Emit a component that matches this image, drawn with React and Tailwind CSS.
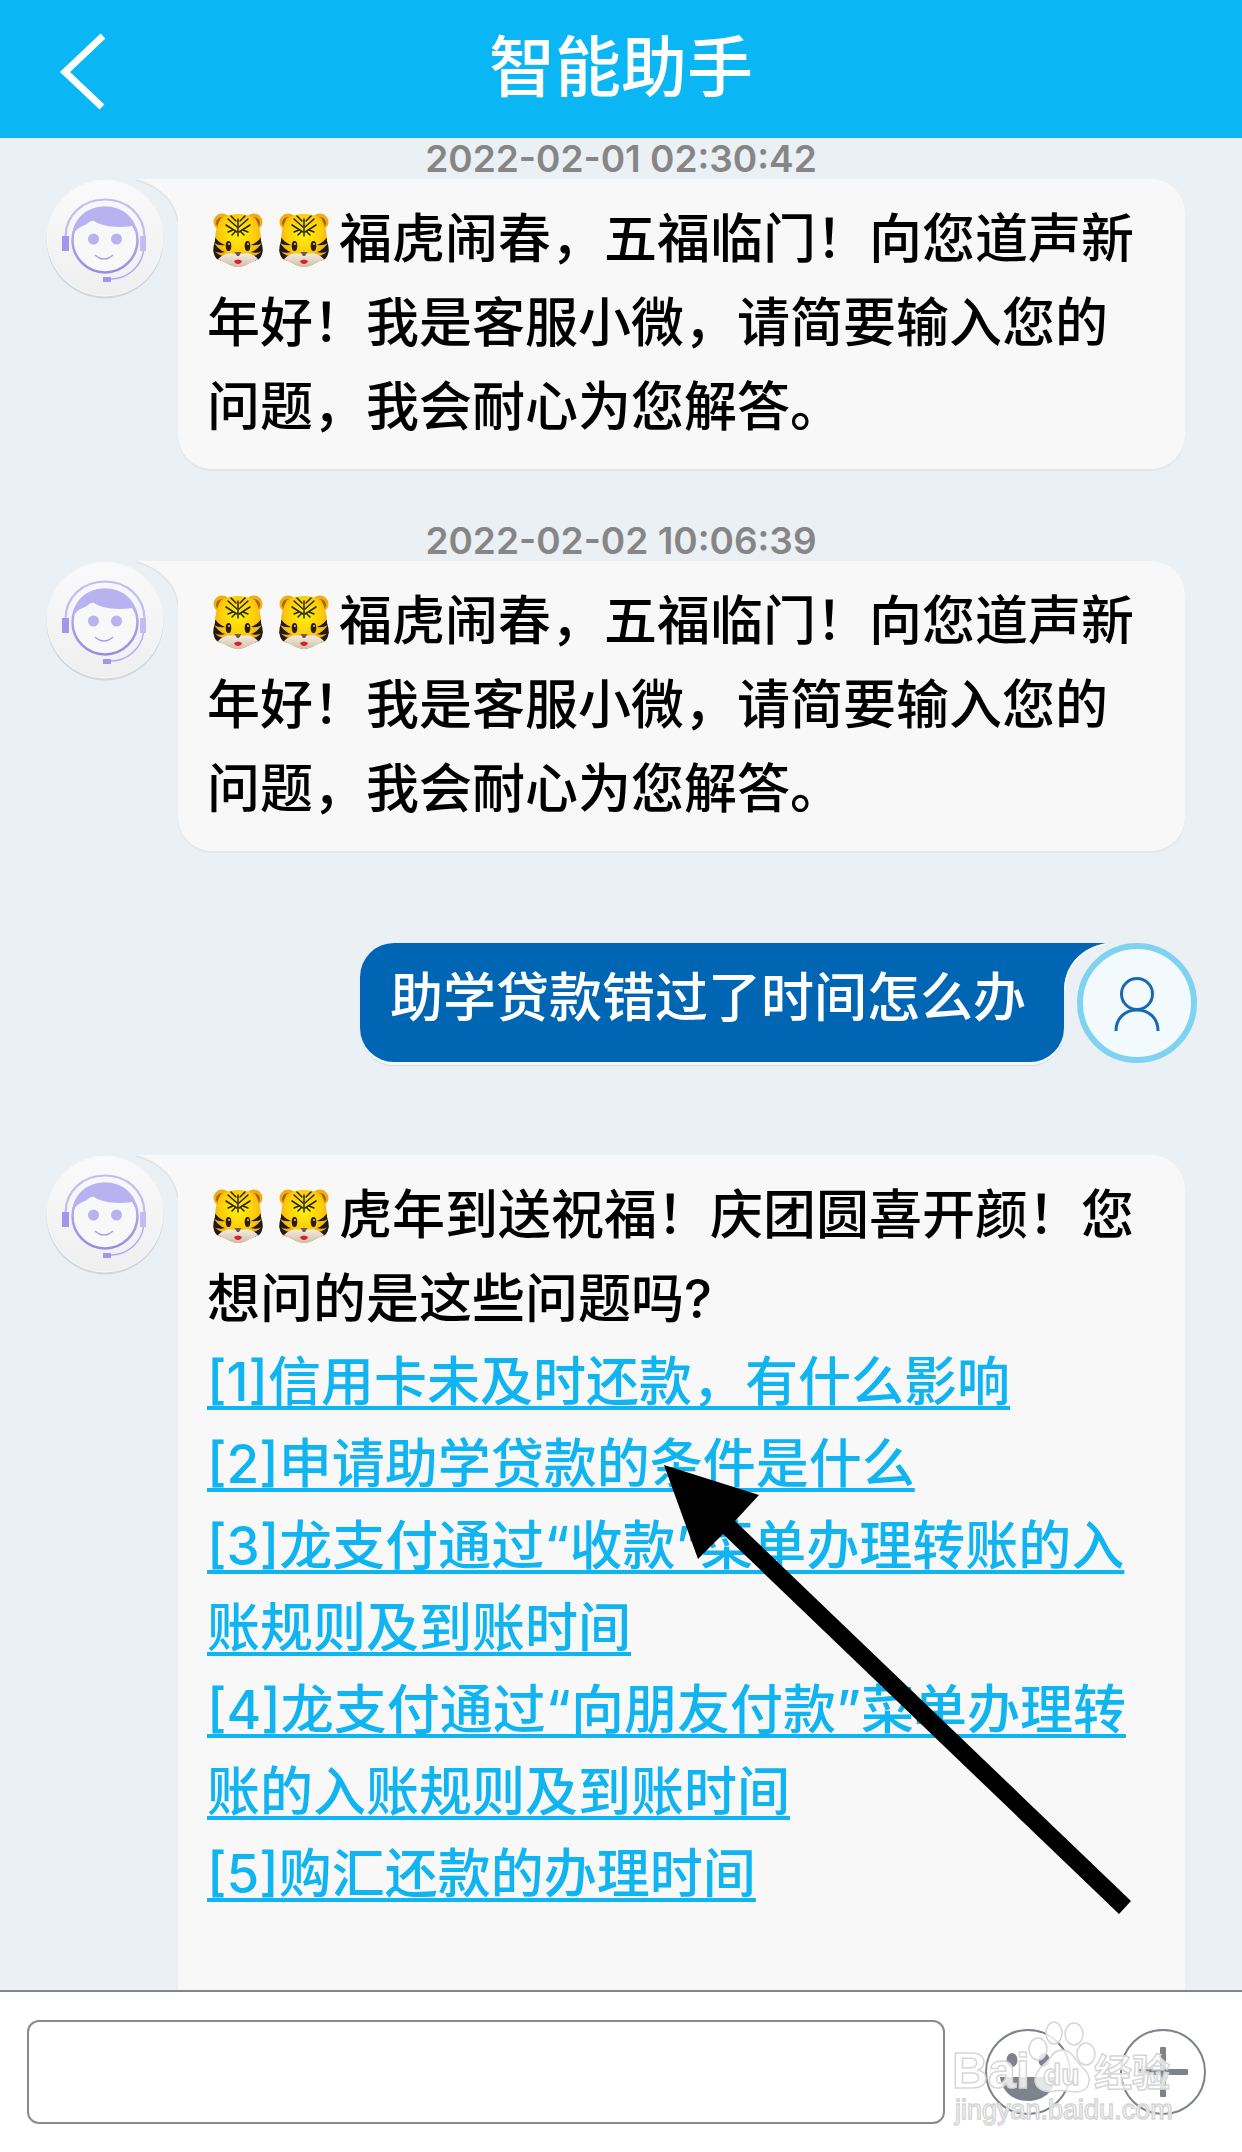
import React from 'react';

function TigerShape() {
  return (
    <svg viewBox="0 0 50 54" className="h-[54px] w-[50px]" role="img" aria-label="🐯">
      <defs>
        <radialGradient id="fur" cx="50%" cy="38%" r="62%">
          <stop offset="0" stopColor="#fff20a" />
          <stop offset="0.6" stopColor="#fdca0b" />
          <stop offset="1" stopColor="#e8960c" />
        </radialGradient>
        <linearGradient id="muzzle" x1="0" y1="0" x2="0" y2="1">
          <stop offset="0" stopColor="#f6efe4" />
          <stop offset="1" stopColor="#cdbda8" />
        </linearGradient>
        <clipPath id="face">
          <path d="M8 5 Q25 -3 42 5 Q48 15 48 28 Q52 40 46 46 Q38 49 33 52 Q25 56 17 52 Q12 49 4 46 Q-2 40 2 28 Q2 15 8 5Z" />
        </clipPath>
      </defs>
      <circle cx="9" cy="9" r="8.500" fill="#eeb010" />
      <circle cx="41" cy="9" r="8.500" fill="#eeb010" />
      <circle cx="9" cy="10" r="6" fill="#a8680a" />
      <circle cx="41" cy="10" r="6" fill="#a8680a" />
      <g clipPath="url(#face)">
        <rect width="50" height="54" fill="url(#fur)" />
        <g fill="#1c1a1c">
          <path d="M0 21 Q4 29 12 32 Q6 33 1 30Z" />
          <path d="M0 28 Q5 37 12 39 Q7 41 0 38Z" />
          <path d="M0 36 Q5 43 11 43 L7 49 L0 47Z" />
          <path d="M50 21 Q46 29 38 32 Q44 33 49 30Z" />
          <path d="M50 28 Q45 37 38 39 Q43 41 50 38Z" />
          <path d="M50 36 Q45 43 39 43 L43 49 L50 47Z" />
        </g>
        <path d="M4 47 Q12 38 21 41 Q25 37 29 41 Q38 38 46 47 Q36 50 25 55 Q14 50 4 47Z" fill="url(#muzzle)" />
      </g>
      <g stroke="#2a260c" strokeWidth="1.500" fill="none" strokeLinecap="round">
        <path d="M25 6 V23" />
        <path d="M18 3 L23 8 M32 3 L27 8 M15 6 L24 14 M35 6 L26 14 M13 12 L24 19 M37 12 L26 19 M15 19 L20 17 M35 19 L30 17 M19 22 L22 19 M31 22 L28 19" />
      </g>
      <ellipse cx="15.500" cy="33" rx="2.800" ry="5" fill="#2b1c0c" />
      <ellipse cx="34.500" cy="33" rx="2.800" ry="5" fill="#2b1c0c" />
      <circle cx="16" cy="31" r="1" fill="#d9c9a8" />
      <circle cx="35" cy="31" r="1" fill="#d9c9a8" />
      <path d="M21.500 39 H28.500 L26 43 H24Z" fill="#6e5a4c" />
      <path d="M21 48 Q25 45 29 48 Q28 51 25 51 Q22 51 21 48Z" fill="#d81f2a" />
    </svg>
  );
}

function Tiger() {
  return (
    <span className="mb-2 inline-flex h-[54px] w-[66px] items-center pl-1.5 align-middle">
      <TigerShape />
    </span>
  );
}

function BotAvatar() {
  return (
    <svg viewBox="0 0 120 120" className="size-[120px] shrink-0" role="img" aria-label="客服小微">
      <defs>
        <linearGradient id="violet" x1="0" y1="0" x2="0" y2="1">
          <stop offset="0" stopColor="#c3bcf4" />
          <stop offset="1" stopColor="#9a8be0" />
        </linearGradient>
        <linearGradient id="disc" x1="0" y1="0" x2="0" y2="1">
          <stop offset="0" stopColor="#fafafb" />
          <stop offset="1" stopColor="#efeff0" />
        </linearGradient>
      </defs>
      <circle cx="60" cy="61" r="58.500" fill="#d3d7db" />
      <circle cx="60" cy="59" r="58" fill="url(#disc)" stroke="#f6f7f8" strokeWidth="1" />
      <path d="M20.500 60 V58 C20.500 36 38 20.500 60 20.500 S99.500 36 99.500 58" fill="none" stroke="#c3bcf4" strokeWidth="2.200" />
      <circle cx="60" cy="61" r="32.500" fill="#f8f8f9" stroke="url(#violet)" strokeWidth="2.500" />
      <path d="M28 56 C29 38 42 28 60 28 S91 38 92 56 Q90 52 87 47 C74 49 58 48 49 42 C45 41 43 45 40 46 Q31 49 28 56Z" fill="#b9b2f0" />
      <circle cx="48.500" cy="60" r="5.500" fill="#b9b2f0" />
      <circle cx="71.500" cy="60" r="5.500" fill="#b9b2f0" />
      <path d="M50 76 Q59 84 68 76" fill="none" stroke="#a79df0" strokeWidth="1.500" />
      <rect x="17" y="57" width="7" height="15" fill="#a396ea" />
      <rect x="95" y="57" width="6" height="15" fill="#c3bcf4" />
      <path d="M98.500 72 C96 88 82 100 66 100" fill="none" stroke="#b3aaee" strokeWidth="1.500" />
      <rect x="58" y="98" width="8" height="5" fill="#a396ea" />
    </svg>
  );
}

function BotMessage({ children }) {
  return (
    <div className="flex items-start gap-[13px] pr-[57px] pl-[45px]">
      <BotAvatar />
      <div className="relative min-w-0 flex-1 rounded-[34px] rounded-tl-none bg-[#f8f8f8] pt-[18px] pr-[30px] pb-5 pl-[29px] text-[53px] leading-[82px] font-medium text-black shadow-[0_2px_1px_#e2e6e9]">
        <svg viewBox="0 0 42 46" className="absolute top-0 -left-[42px] h-[46px] w-[42px]" aria-hidden="true">
          <path d="M0 0 H42 V46 C41 24 24 6 0 0Z" fill="#f8f8f8" />
          <path d="M0 1 C24 7 40 24 42 44" fill="none" stroke="#dfe4e8" strokeWidth="1.500" />
        </svg>
        {children}
      </div>
    </div>
  );
}

function Stamp({ children }) {
  return <time className="block text-center text-[37px] leading-[41px] font-semibold text-[#868686]">{children}</time>;
}

function Greeting() {
  return (
    <p className="leading-[84px]">
      <Tiger />
      <Tiger />
      福虎闹春，五福临门！向您道声新年好！我是客服小微，请简要输入您的问题，我会耐心为您解答。
    </p>
  );
}

const questions = [
  '[1]信用卡未及时还款，有什么影响',
  '[2]申请助学贷款的条件是什么',
  '[3]龙支付通过“收款”菜单办理转账的入账规则及到账时间',
  '[4]龙支付通过“向朋友付款”菜单办理转账的入账规则及到账时间',
  '[5]购汇还款的办理时间',
];

function Watermark() {
  return (
    <svg
      viewBox="0 0 240 120"
      className="pointer-events-none absolute top-[22px] right-[52px] h-[120px] w-[240px]"
      aria-hidden="true"
      fill="#ffffff"
      fillOpacity="0.8"
      stroke="#d6d6d6"
      strokeWidth="1.500"
    >
      <ellipse cx="88" cy="35" rx="9" ry="11" />
      <ellipse cx="104" cy="19" rx="8" ry="11" />
      <ellipse cx="124" cy="20" rx="9" ry="11" />
      <ellipse cx="136" cy="40" rx="9" ry="11" />
      <path d="M113 36 C122 36 126 48 134 55 C143 64 140 78 126 78 C118 78 112 75 104 77 C91 79 82 72 86 61 C89 53 96 50 100 44 C104 38 107 36 113 36Z" />
      <text x="2" y="74" fontSize="50" fontWeight="700" fontFamily="Liberation Sans, sans-serif">Bai</text>
      <text x="93" y="71" fontSize="30" fontWeight="700" fontFamily="Liberation Sans, sans-serif">du</text>
      <text x="144" y="72" fontSize="38" fontWeight="700" fontFamily="Noto Sans CJK SC, sans-serif">经验</text>
      <text x="5" y="105" fontSize="27" fontFamily="Liberation Sans, sans-serif">jingyan.baidu.com</text>
    </svg>
  );
}

export default function App() {
  return (
    <div className="flex h-screen flex-col bg-[#ebf0f5] font-['Inter','Noto_Sans_CJK_SC',sans-serif]">
      <header className="grid h-[138px] shrink-0 grid-cols-[1fr_auto_1fr] items-center bg-[#0bb6f4] text-white">
        <button type="button" aria-label="返回" className="ml-14 w-14">
          <svg viewBox="0 0 56 84" className="h-[84px] w-14" fill="none" stroke="currentColor" strokeWidth="7">
            <path d="M47 9 L9 45 L46 80" />
          </svg>
        </button>
        <h1 className="pb-1 text-[66px] leading-[88px] font-medium">智能助手</h1>
      </header>

      <main className="-mt-1 min-h-0 flex-1 overflow-hidden pt-1">
        <Stamp>2022-02-01 02:30:42</Stamp>
        <BotMessage>
          <Greeting />
        </BotMessage>

        <div className="pt-[51px]">
          <Stamp>2022-02-02 10:06:39</Stamp>
        </div>
        <BotMessage>
          <Greeting />
        </BotMessage>

        <div className="flex items-start justify-end gap-[13px] py-[92px] pr-[45px]">
          <div className="relative rounded-[34px] rounded-tr-none bg-[#0066b4] pt-3.5 pr-[38px] pb-[23px] pl-[30px] shadow-[0_3px_0_#f4f8fb,0_4px_1px_#d5dbe2]">
            <svg viewBox="0 0 42 46" className="absolute top-0 -right-[42px] h-[46px] w-[42px]" aria-hidden="true">
              <path d="M43 0 H0 V46 C1 22 18 4 42 0Z" fill="#0066b4" />
              <path d="M42 1 C18 6 1 22 1 46" fill="none" stroke="#f4f8fb" strokeWidth="1.500" />
            </svg>
            <p className="text-[53px] leading-[82px] font-medium text-white">助学贷款错过了时间怎么办</p>
          </div>
          <div className="flex size-[120px] shrink-0 items-center justify-center rounded-full border-6 border-[#7fd3f1] bg-[#f3fafe]">
            <svg viewBox="0 0 48 58" className="h-[58px] w-12" fill="none" stroke="#1a69b0" strokeWidth="3" role="img" aria-label="我">
              <circle cx="24" cy="20" r="15.500" />
              <path d="M3 57 C3 44 12 36 24 36 S45 44 45 57" />
            </svg>
          </div>
        </div>

        <BotMessage>
          <p className="leading-[84px]">
            <Tiger />
            <Tiger />
            虎年到送祝福！庆团圆喜开颜！您想问的是这些问题吗?
          </p>
          <ul className="pb-28 text-[#10b4f0]">
            {questions.map((question) => (
              <li key={question}>
                <a href="#question" className="underline decoration-4 underline-offset-[5px] [text-decoration-skip-ink:none]">
                  {question}
                </a>
              </li>
            ))}
          </ul>
          <svg viewBox="0 0 468 450" className="pointer-events-none absolute top-[310px] left-[486px] h-[450px] w-[468px]" aria-hidden="true">
            <path d="M0 0 L95 30 L71 56 L467 436 L455 449 L59 69 L34 94Z" fill="#000000" />
          </svg>
        </BotMessage>
      </main>

      <footer className="relative flex shrink-0 items-center border-t-2 border-[#858585] bg-white pt-7 pr-9 pb-7 pl-[27px]">
        <input type="text" aria-label="输入您的问题" className="h-[104px] min-w-0 flex-1 rounded-xl border-2 border-[#8b8b8b] bg-white px-6 text-[53px]" />
        <button type="button" aria-label="表情" className="ml-10 size-[86px]">
          <svg viewBox="0 0 86 86" className="size-[86px]" fill="#7e828b">
            <circle cx="43" cy="43" r="42" fill="none" stroke="#7e828b" strokeWidth="2" />
            <ellipse cx="27" cy="31" rx="5.500" ry="7" />
            <ellipse cx="59" cy="31" rx="5.500" ry="7" />
            <path d="M15 48 H71 C69 63 58 72 43 72 S17 63 15 48Z" />
          </svg>
        </button>
        <button type="button" aria-label="更多" className="ml-[49px] size-[86px]">
          <svg viewBox="0 0 86 86" className="size-[86px]" fill="#7e828b">
            <circle cx="43" cy="43" r="42" fill="none" stroke="#7e828b" strokeWidth="2" />
            <rect x="18" y="40" width="50" height="6" rx="1" />
            <rect x="40" y="18" width="6" height="50" rx="1" />
          </svg>
        </button>
        <Watermark />
      </footer>
    </div>
  );
}
